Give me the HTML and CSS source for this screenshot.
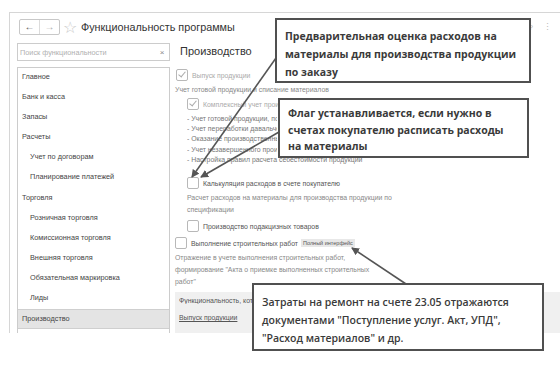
FILE: index.html
```html
<!DOCTYPE html>
<html lang="ru">
<head>
  <meta charset="UTF-8">
  <title>Функциональность программы</title>
  <link rel="stylesheet" href="styles.css">
</head>
<body>

  <div class="window">
    <div class="header">
      <div class="nav-buttons">
        <span class="nav-btn">&#8592;</span>
        <span class="nav-btn">&#8594;</span>
      </div>
      <span class="star">&#9734;</span>
      <span class="title">Функциональность программы</span>
      <span class="help">?</span>
      <span class="more">&#8942;</span>
    </div>

    <div class="columns">
      <div class="side">
        <div class="search">
          <span class="search-text">Поиск функциональности</span>
          <span class="search-clear">×</span>
        </div>
        <ul class="menu">
          <li>Главное</li>
          <li>Банк и касса</li>
          <li>Запасы</li>
          <li>Расчеты</li>
          <li class="sub">Учет по договорам</li>
          <li class="sub">Планирование платежей</li>
          <li>Торговля</li>
          <li class="sub">Розничная торговля</li>
          <li class="sub">Комиссионная торговля</li>
          <li class="sub">Внешняя торговля</li>
          <li class="sub">Обязательная маркировка</li>
          <li class="sub">Лиды</li>
          <li class="active">Производство</li>
        </ul>
      </div>

      <div class="main">
        <h2>Производство</h2>

        <label class="check disabled first"><span class="box checked"></span>Выпуск продукции</label>
        <p class="note">Учет готовой продукции и списание материалов</p>

        <div class="group">
          <label class="check disabled clip"><span class="box checked"></span>Комплексный учет производства</label>
          <ul class="dash">
            <li class="clip">- Учет готовой продукции, полуфабрикатов</li>
            <li class="clip">- Учет переработки давальческого сырья</li>
            <li class="clip">- Оказание производственных услуг</li>
            <li class="clip">- Учет незавершенного производства</li>
            <li>- Настройка правил расчета себестоимости продукции</li>
          </ul>

          <label class="check calc"><span class="box"></span>Калькуляция расходов в счете покупателю</label>
          <p class="note">Расчет расходов на материалы для производства продукции по<br>спецификации</p>

          <label class="check excise"><span class="box"></span>Производство подакцизных товаров</label>
        </div>

        <label class="check build"><span class="box"></span>Выполнение строительных работ <span class="badge">Полный интерфейс</span></label>
        <p class="note">Отражение в учете выполнения строительных работ,<br>формирование "Акта о приемке выполненных строительных<br>работ"</p>

        <div class="info">
          <p>Функциональность, которая используется</p>
          <a href="#">Выпуск продукции</a>
        </div>
      </div>
    </div>
  </div>

  <svg class="arrows" width="560" height="366" viewBox="0 0 560 366">
    <defs>
      <marker id="head" markerWidth="8" markerHeight="8" refX="7" refY="4" orient="auto" markerUnits="userSpaceOnUse">
        <path d="M0,0 L8,4 L0,8 Z" fill="#555"/>
      </marker>
    </defs>
    <line x1="276" y1="58" x2="192" y2="177" stroke="#555" stroke-width="1.6" marker-end="url(#head)"/>
    <line x1="279" y1="132" x2="201" y2="177" stroke="#555" stroke-width="1.6" marker-end="url(#head)"/>
    <line x1="406" y1="284" x2="352" y2="248" stroke="#555" stroke-width="1.6" marker-end="url(#head)"/>
  </svg>

  <div class="callout c1">Предварительная оценка расходов на<br>материалы для производства продукции<br>по заказу</div>
  <div class="callout c2">Флаг устанавливается, если нужно в<br>счетах покупателю расписать расходы<br>на материалы</div>
  <div class="callout c3">Затраты на ремонт на счете 23.05 отражаются<br>документами "Поступление услуг. Акт, УПД",<br>"Расход материалов" и др.</div>

</body>
</html>
```

FILE: styles.css
```css
body {
  margin: 0;
  background: #fff;
  font-family: "Liberation Sans", Arial, sans-serif;
  color: #444;
  width: 560px;
  height: 366px;
  overflow: hidden;
  position: relative;
}

.window {
  margin: 12px 0 0 9px;
  height: 320px;
  border-top: 1px solid #d6d6d6;
  border-left: 1px solid #d6d6d6;
  overflow: hidden;
}

.header {
  display: flex;
  align-items: center;
  height: 28px;
  padding-left: 9px;
}

.nav-buttons {
  display: flex;
  border: 1px solid #c8c8c8;
  border-radius: 2px;
  height: 14px;
}

.nav-btn {
  width: 19px;
  font-size: 10px;
  line-height: 14px;
  text-align: center;
  color: #555;
}

.nav-btn + .nav-btn {
  border-left: 1px solid #dcdcdc;
  color: #aaa;
}

.star {
  margin-left: 3px;
  font-size: 16px;
  color: #c8c8c8;
}

.title {
  margin-left: 4px;
  font-size: 10.8px;
  color: #333;
}

.help {
  margin-left: auto;
  font-size: 8px;
  color: #bbb;
}

.more {
  margin: 0 8px 0 10px;
  font-size: 9px;
  color: #bbb;
}

.columns {
  display: flex;
}

.side {
  width: 153px;
  margin-left: 7px;
}

.search {
  display: flex;
  align-items: center;
  height: 16px;
  border: 1px solid #ccc;
  margin-top: 2px;
}

.search-text {
  flex: 1;
  padding-left: 2px;
  font-size: 7.3px;
  color: #b0b0b0;
}

.search-clear {
  width: 14px;
  font-size: 8px;
  text-align: center;
  color: #888;
}

.menu {
  list-style: none;
  margin: 6px 0 0;
  padding: 0;
  border: 1px solid #ccc;
  border-bottom: none;
  height: 300px;
}

.menu li {
  height: 20.1px;
  line-height: 18px;
  padding-left: 4px;
  font-size: 7.3px;
  color: #444;
}

.menu li.sub {
  padding-left: 12px;
}

.menu li.active {
  background: #e4e4e4;
  box-shadow: inset 0 1px 0 #cfcfcf, inset 0 -1px 0 #cfcfcf;
  line-height: 20px;
}

.main {
  flex: 1;
  padding-left: 5px;
  font-size: 6.9px;
  color: #666;
}

.main h2 {
  margin: 4px 0 12px 5px;
  font-weight: normal;
  font-size: 11px;
  color: #333;
}

.check {
  display: flex;
  align-items: center;
  height: 12px;
  font-size: 6.9px;
  color: #555;
}

.check.disabled {
  color: #aaa;
}

.clip {
  white-space: nowrap;
  overflow: hidden;
}

.group .check.clip {
  width: 92px;
}

.dash li.clip {
  width: 90px;
}

.box {
  width: 10px;
  height: 10px;
  border: 1px solid #b8b8b8;
  border-radius: 2px;
  background: #fff;
  margin-right: 4px;
  position: relative;
  flex: none;
}

.box.checked::after {
  content: "";
  position: absolute;
  left: 3px;
  top: 0px;
  width: 3px;
  height: 6px;
  border: solid #aaa;
  border-width: 0 1.3px 1.3px 0;
  transform: rotate(40deg);
}

.check.first {
  margin-left: 1px;
}

.note {
  margin: 3px 0 0;
  line-height: 12px;
  font-size: 6.9px;
  color: #888;
}

.group {
  padding-left: 12px;
  margin-top: 2px;
}

.dash {
  list-style: none;
  margin: 4px 0 0 0;
  padding: 0;
  line-height: 10.2px;
  color: #777;
}

.check.calc {
  margin-top: 12px;
}

.check.excise {
  margin-top: 4px;
}

.check.build {
  margin-top: 5px;
}

.badge {
  margin-left: 3px;
  background: #e8e8e8;
  font-size: 5.5px;
  padding: 1px 2px;
  color: #555;
}

.info {
  margin-top: 4px;
  background: #f0f0f0;
  height: 50px;
  padding: 5px 4px;
  font-size: 6.9px;
  color: #555;
}

.info p {
  margin: 0 0 10px;
  width: 74px;
  white-space: nowrap;
  overflow: hidden;
}

.info a {
  color: #555;
}

.arrows {
  position: absolute;
  left: 0;
  top: 0;
}

.callout {
  position: absolute;
  box-sizing: border-box;
  background: #fff;
  border: 2px solid #505050;
  font-family: "Open Sans", "DejaVu Sans", sans-serif;
  font-weight: 700;
  font-size: 10.5px;
  color: #3a3a3a;
  line-height: 18px;
  padding: 7px 8px;
}

.c1 {
  left: 275px;
  top: 18px;
  width: 256px;
  height: 65px;
}

.c2 {
  left: 278px;
  top: 98px;
  width: 251px;
  height: 60px;
  line-height: 16.5px;
  padding-top: 5px;
}

.c3 {
  left: 252px;
  top: 283px;
  width: 292px;
  height: 68px;
  font-weight: 600;
  padding: 8px 8px;
}
```
